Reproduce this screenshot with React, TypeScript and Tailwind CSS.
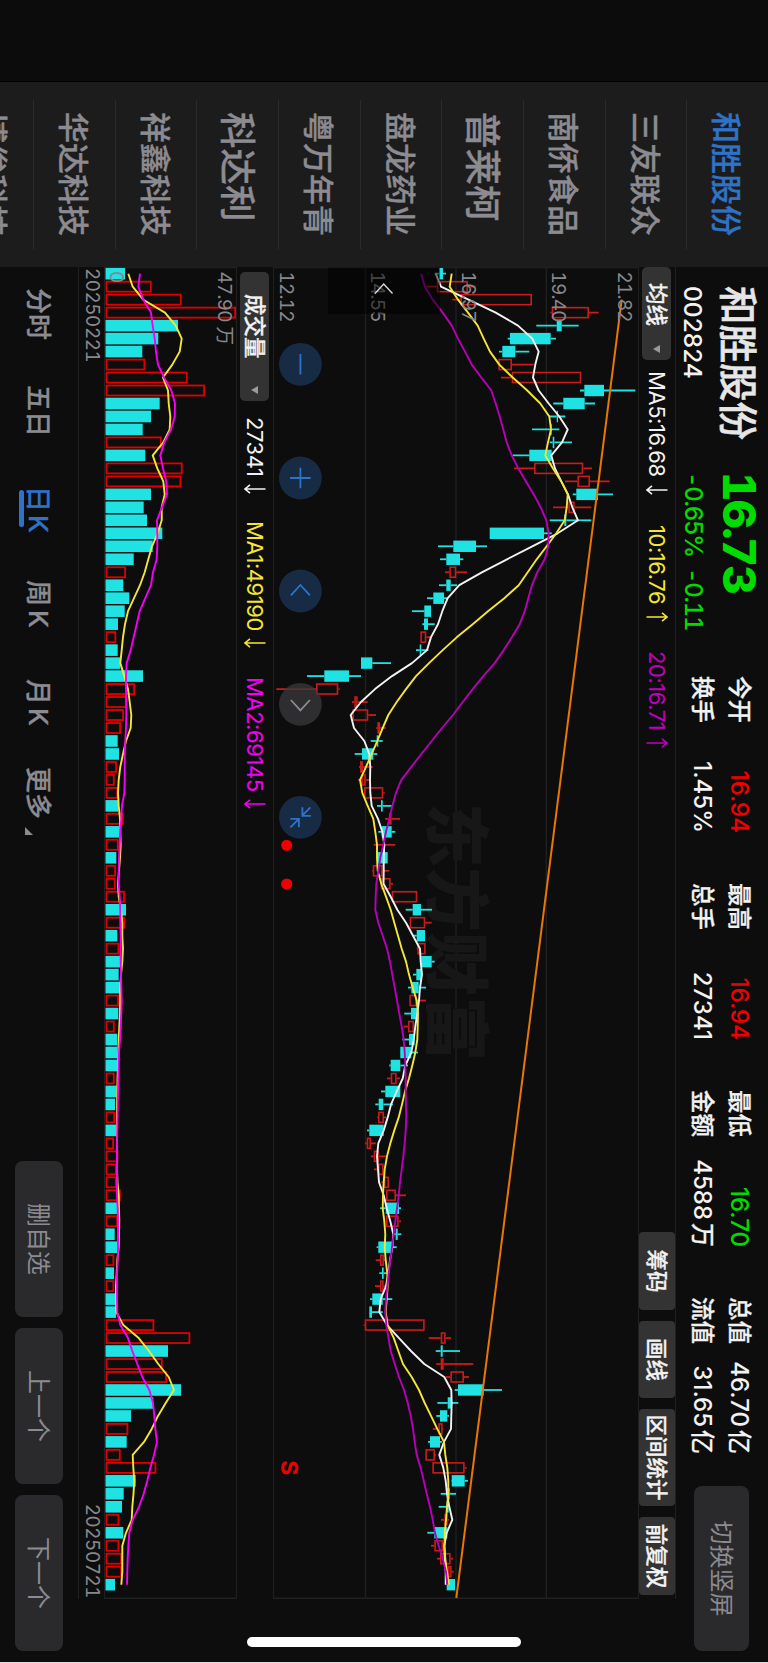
import React from "react";

const FONT = "font-['Inter','Noto_Sans_CJK_SC',sans-serif]";

/* ---------- data ---------- */

// kind, low, body low, body high, high, volume level (negative = rising volume bar)
type Row = [string, number, number, number, number, number];

const ROWS: Row[] = [
  ["d", 434.7, 439, 443, 446, 125], ["u", 426.7, 436.7, 468, 475.7, -151.7], ["u", 452.3, 460.3, 532, 532, -181.7],
  ["u", 550.3, 551.7, 589, 598.7, -236], ["d", 536.3, 556.7, 561.7, 578.7, 178], ["d", 507.7, 510, 550.7, 556, 158.3],
  ["d", 499, 502.3, 515.3, 529.3, 142.3], ["u", 498.3, 498.3, 512, 533.7, -145.3], ["u", 501, 511.7, 581.3, 581.3, -187.7],
  ["d", 580, 584.3, 604, 635.3, -205], ["d", 553.3, 563.3, 584.7, 595, 159.7], ["d", 549, 556.7, 558, 565.3, 151],
  ["d", 532, 550, 551.7, 559.3, 142.7], ["d", 549.7, 552.7, 554.3, 572, -161.7], ["d", 512.7, 529.3, 551.7, 551.7, 145.3],
  ["u", 514, 534, 583.3, 592, -182.7], ["u", 565, 577.3, 590, 609.7, -181.3], ["d", 572.7, 576.3, 598, 613, 151],
  ["u", 553, 568.3, 574.7, 591.3, 143.7], ["d", 549.7, 564.3, 566.3, 591.3, 147], ["d", 489.7, 489.7, 544, 551.7, 162.3],
  ["d", 438, 453.3, 476, 487, 152.7], ["d", 440, 446.3, 460, 463.3, 133.7], ["u", 445, 449.3, 456.3, 467, -126],
  ["d", 439, 446.3, 450.7, 457, 123.3], ["d", 427, 433.3, 444, 447.3, 129.3], ["d", 412, 424.3, 431, 431, 124.7],
  ["d", 422.3, 424, 428, 434.7, 118], ["u", 420.3, 420.3, 426.3, 431, -116.3], ["d", 416, 419.7, 421.3, 428.3, 117.7],
  ["d", 361, 361, 372.3, 391, 120.3], ["d", 307, 324.3, 349, 361, 143], ["u", 276.3, 316, 338.3, 339.7, -135],
  ["u", 352, 354.3, 357.7, 367.7, -126.7], ["u", 351, 352.3, 368.3, 376, -124], ["u", 376.3, 377.3, 380, 385.7, -121],
  ["d", 370.7, 376.7, 378.3, 382.7, 117.7], ["d", 354.7, 362, 373.3, 377.3, 119], ["u", 359, 360, 363, 372.7, -117],
  ["u", 358, 361.3, 365.7, 369.7, -114.7], ["u", 364, 364, 383.3, 384.7, -118], ["d", 377, 381, 382.7, 391.7, 118],
  ["u", 385, 389, 391.7, 400, -123.7], ["d", 378.3, 381.7, 391.7, 395.3, 119], ["u", 373.7, 383.3, 384.7, 395.3, -118.7],
  ["d", 377, 377.3, 387.7, 387.7, 116.3], ["u", 372, 372.7, 382.7, 389.3, -116], ["u", 380, 380.7, 390.7, 393, -115.7],
  ["u", 391.7, 391.7, 417.3, 417.3, -125], ["d", 405.7, 412.7, 421, 432, 126], ["u", 409.7, 409.7, 425.3, 431.7, -125],
  ["d", 412.7, 416.7, 425, 425, 117.3], ["u", 416.7, 417.3, 425.7, 425.7, -119.3], ["d", 420, 421.3, 431.7, 434.7, 120.3],
  ["d", 413, 416.3, 421.7, 421.7, 118.7], ["d", 408, 411.3, 418.7, 426, 120], ["u", 409, 409.3, 416.7, 426, -119],
  ["d", 404.3, 411, 418, 418, 118.3], ["u", 404, 408, 414, 414, -114.7], ["d", 402.3, 409, 414.7, 414.7, 117.3],
  ["d", 400, 400.3, 411.3, 418, 117.3], ["d", 389.3, 390.7, 400.3, 408, 117.3], ["u", 387, 390.7, 396.7, 400, -114.7],
  ["d", 381, 385.3, 400.3, 400.3, 116.7], ["d", 375.3, 378.7, 383.3, 393, 115], ["u", 377.3, 378, 384, 386, -115],
  ["d", 367, 369.3, 383.7, 383.7, 116.7], ["u", 365, 366.7, 371, 375.7, -114], ["u", 371, 373.7, 379, 386, -118.3],
  ["u", 374, 378, 383.7, 383.7, -116.7], ["u", 381.3, 383.7, 389, 389, -116.7], ["u", 386, 386, 396, 406, -120.7],
  ["d", 380, 385.7, 399, 401, 118.3], ["u", 386, 386, 398.7, 401, -118], ["d", 394, 395.7, 397.7, 401.3, 114.7],
  ["d", 376.7, 378.3, 391.7, 396.7, 118], ["u", 375.7, 380, 384, 386, -114.3], ["d", 379.3, 382, 383.7, 387, 114],
  ["u", 375, 380, 383.7, 386, -114.3], ["d", 370, 372.3, 382.7, 392.3, 116], ["d", 369.3, 369.3, 372, 382.7, 116],
  ["u", 363.7, 364.7, 424.7, 424.7, -154.3], ["u", 428.7, 440.7, 445.7, 451, -190.3], ["d", 435.7, 440.7, 442.7, 460, 168],
  ["u", 436.3, 440.7, 443.7, 473.3, -162.7], ["u", 446, 450.3, 464, 469, -167], ["d", 454.7, 458, 483.7, 502, 181],
  ["d", 437.3, 447.7, 451.3, 458.3, 153.3], ["d", 436.3, 440, 447.3, 449, 131], ["u", 432.7, 438.3, 442.7, 443.3, -128.3],
  ["d", 428, 430, 440, 442, 126.7], ["u", 425.3, 425.3, 435, 436, -120.7], ["u", 432.3, 432.3, 464.7, 466.7, -156.3],
  ["d", 451.3, 451.7, 464.7, 468, 135.7], ["d", 440.7, 447, 449.7, 456, 123.7], ["d", 438.7, 446.7, 448.7, 448.7, 122],
  ["u", 441, 444.3, 447.7, 449, -119.3], ["d", 427.3, 434.3, 447.3, 447.3, 123.3], ["u", 431, 434.3, 443, 444, -119.3],
  ["u", 437, 440, 450.7, 453, -122], ["u", 447.3, 448, 451.7, 453.7, -122], ["d", 446.7, 446.7, 455, 455, 115],
];

const MA5 = [
  435.7, 441, 468.5, 495.7, 518, 532.3, 538.7, 535.3, 533, 538.7, 548.7, 559.3, 567.7, 562, 551.3, 555, 561.3, 568, 572.3, 578,
  557.7, 532.3, 507, 482.3, 459.3, 447.7, 442.3, 438, 431, 427, 412, 392, 375, 361, 350.7, 354, 364.3, 369.3, 370.3, 370,
  370.3, 371.7, 378, 382.3, 384.3, 383.7, 383.7, 383.5, 390.7, 397.3, 406, 413, 420, 420.7, 422, 420, 419, 417.3, 415.3, 413.7,
  411.3, 405.3, 402.7, 396.7, 391, 387.7, 383.7, 378.3, 377, 378, 379, 383.7, 386.7, 390.3, 393.3, 392.3, 390, 388.3, 386, 380.7,
  379.3, 387, 399, 411, 424.3, 444.3, 451.3, 451.7, 451.3, 451, 444, 439.3, 443.3, 445.7, 447, 449.3, 452.3, 446.7, 444.3, 444.7,
  445.7, 445.7,
];
const MA10 = [
  451.7, 449.7, 458, 468, 477.7, 483.7, 490, 499.3, 512.7, 527.3, 540.3, 549.3, 551, 548, 545.3, 553, 561.3, 567.7, 566.7, 564.7,
  556.3, 546.7, 536.7, 527.7, 518.7, 504.3, 488, 472.7, 457, 442.7, 429, 416, 406, 396.7, 388.3, 382.7, 377.3, 371.7, 366, 360,
  362.3, 367.7, 373.3, 375.3, 377, 377, 377.7, 381.3, 386, 390.7, 394.3, 398, 401.7, 406, 409, 412.7, 416.7, 418, 417.7, 417.3,
  415.3, 412.3, 409, 405, 402, 398.7, 394.3, 390.3, 387, 384.7, 383.7, 383, 382.7, 384.3, 385.3, 384.7, 385.7, 387.3, 387.7, 386.7,
  385.7, 387.7, 393.8, 398.3, 403, 411.7, 419, 424.7, 431, 437.3, 444, 445.3, 447.3, 448.3, 448.3, 447, 446, 444.7, 444.5, 445.3,
  447, 449,
];
const MA20 = [
  421, 425, 432.7, 442.7, 451.7, 458, 465, 471.7, 481.3, 491.3, 495.7, 499.7, 503.3, 506.7, 511.7, 518.3, 526, 533.7, 540.7, 546.3,
  548.7, 548.3, 544.7, 537.3, 532, 528.3, 524.7, 519.7, 512, 503.7, 494.7, 483.3, 472.7, 462.7, 453, 442, 431.7, 421.3, 411.3, 401.3,
  396, 392.3, 389.3, 386, 383.3, 380.3, 378.3, 376.3, 375.7, 375.3, 378.3, 382.7, 387, 390, 392.3, 394.7, 397, 399.3, 401.7, 403.7,
  404.7, 405.3, 405.7, 405.7, 406, 406.3, 405.7, 404.7, 403.3, 401.7, 400, 398.7, 397, 395.3, 393.7, 392, 390.3, 388.7, 387.3, 386,
  385.3, 386.3, 388.5, 390.7, 394.7, 399, 404, 407.7, 410.7, 413, 414.7, 416.7, 420.7, 423.7, 426.7, 430, 432.7, 435, 438.7, 442.7,
  446, 447.3,
];
const VOL_A = [
  128.3, 132.7, 143.3, 165, 175.7, 181.7, 179.7, 172.3, 163, 168, 168.7, 170.3, 169.7, 163.3, 152.7, 157.3, 163.3, 164.7, 161.7, 161.7,
  157.7, 152, 148.3, 144.7, 140, 134, 128, 125, 123, 121.7, 120.3, 124.3, 128, 129.7, 131.3, 130.7, 126, 123, 120.3, 118.7,
  118, 118.7, 120, 120.3, 120.7, 120, 119, 118, 118.7, 121, 122.3, 122.3, 123, 122.3, 121, 120.3, 120, 120, 119.3, 118.7,
  118.3, 118, 117.5, 117.3, 117, 117, 117, 117, 117, 117, 117.5, 118.7, 119, 119.3, 119, 118.7, 117.3, 116.7, 116, 116,
  116.3, 123.3, 138.7, 149, 158.3, 168.7, 174, 165.7, 158, 151.7, 144, 132.7, 133.3, 134.3, 133.5, 132.3, 131.7, 126, 122.3, 122.3,
  122.3, 121.3,
];
const VOL_B = [
  140, 138.3, 143.3, 151, 152.7, 154.7, 156, 158, 164, 171.3, 175, 174.7, 171, 164.3, 160.3, 163, 166.3, 167, 162, 157,
  157.3, 157.3, 156.7, 153, 151, 145.3, 139.7, 136.7, 133.7, 130.7, 126.7, 126, 126, 126.3, 126.3, 126, 125.3, 124.7, 124.7, 124.7,
  124.3, 122, 121.3, 120.3, 119.7, 119, 118.7, 118.7, 119.7, 120.3, 120.3, 120.7, 120.7, 120.7, 121, 121.3, 121.7, 121.3, 120.7, 120,
  119, 118.7, 118.3, 118, 117.7, 117.5, 117.3, 117, 117, 117, 117, 117, 117.7, 118, 118, 118, 117.7, 117, 117, 117,
  117.3, 120.3, 128, 132.3, 137.3, 142.3, 149.3, 153, 154.3, 155.3, 157, 154, 150.3, 147.3, 143.7, 139, 132.7, 129.3, 128.3, 127.7,
  127.3, 127,
];

const xOf = (i: number) => 273.7 + 12.98 * i;
const yOf = (level: number) => 768 - level;
const toPoints = (levels: number[]) =>
  levels.map((v, i) => `${xOf(i).toFixed(1)},${yOf(v).toFixed(1)}`).join(" ");

/* ---------- small pieces ---------- */

function Arrow({ up = false }: { up?: boolean }) {
  return (
    <svg className="h-[22px] w-[10px] shrink-0" viewBox="0 0 10 22" fill="none" stroke="currentColor" strokeWidth="1.6">
      {up ? <path d="M5 21.5V1M0.8 6L5 1l4.2 5" /> : <path d="M5 .5V21M0.8 16L5 21l4.2-5" />}
    </svg>
  );
}

function Caret() {
  return (
    <svg className="h-[7px] w-[8px] shrink-0" viewBox="0 0 8 7">
      <path d="M0 0h8L4 7z" fill="#9a9a9e" />
    </svg>
  );
}

function Candle({ row, i }: { row: Row; i: number }) {
  const [kind, low, bodyLow, bodyHigh, high] = row;
  const x = xOf(i);
  const up = kind === "u";
  const color = up ? "#cb1b1b" : "#20e2e2";
  return (
    <g>
      {high > bodyHigh && <path d={`M${x} ${yOf(high)}V${yOf(bodyHigh)}`} stroke={color} strokeWidth="1.8" />}
      {low < bodyLow && <path d={`M${x} ${yOf(low)}V${yOf(bodyLow)}`} stroke={color} strokeWidth="1.8" />}
      {up ? (
        <rect
          x={x - 5}
          y={yOf(bodyHigh) + 0.8}
          width="10"
          height={Math.max(bodyHigh - bodyLow - 1.6, 0.2)}
          fill="none"
          stroke={color}
          strokeWidth="1.6"
        />
      ) : (
        <rect x={x - 5.7} y={yOf(bodyHigh)} width="11.4" height={bodyHigh - bodyLow} fill={color} />
      )}
    </g>
  );
}

function VolumeBar({ level, i }: { level: number; i: number }) {
  const x = xOf(i);
  const top = yOf(Math.abs(level));
  return level < 0 ? (
    <rect x={x - 5} y={top + 0.9} width="10" height={662 - top - 1.4} fill="none" stroke="#e00000" strokeWidth="1.8" />
  ) : (
    <rect x={x - 5.8} y={top} width="11.6" height={662.5 - top} fill="#20e2e2" />
  );
}

/* ---------- sidebar ---------- */

const STOCKS = [
  "和胜股份", "三友联众", "南侨食品", "普莱柯", "盘龙药业",
  "粤万年青", "科达利", "祥鑫科技", "华达科技", "博俊科技",
];

function Sidebar() {
  return (
    <aside className="flex w-[185px] shrink-0 flex-col overflow-hidden bg-[#1c1c1c] px-[18px]">
      {STOCKS.map((name, i) => (
        <div
          key={name}
          className={`flex h-[81.67px] shrink-0 items-center whitespace-nowrap border-b border-[#2b2b2b] pl-[12px] pt-[3px] font-medium [-webkit-text-stroke:0.35px] ${
            name.length === 3 ? "text-[36.5px]" : "text-[31px]"
          } ${i === 0 ? "text-[#2f73c8]" : "text-[#8c8b91]"}`}
        >
          {name}
        </div>
      ))}
    </aside>
  );
}

/* ---------- header ---------- */

const STATS = [
  { label: ["今开", "换手"], value: ["16.94", "1.45%"], unit: ["", ""], tone: "text-[#f00000]" },
  { label: ["最高", "总手"], value: ["16.94", "27341"], unit: ["", ""], tone: "text-[#f00000]" },
  { label: ["最低", "金额"], value: ["16.70", "4588"], unit: ["", "万"], tone: "text-[#00dc00]" },
  { label: ["总值", "流值"], value: ["46.70", "31.65"], unit: ["亿", "亿"], tone: "text-[#f2f2f2]" },
];

function Header() {
  return (
    <header className="flex h-[92px] shrink-0 font-medium text-[#f2f2f2]">
      <div className="ml-[19px] flex w-[186px] flex-col whitespace-nowrap">
        <div className="mt-[10px] text-[38.5px] leading-[40px] text-[#e6e6e6] [-webkit-text-stroke:0.6px]">和胜股份</div>
        <div className="mt-[11px] text-[24.5px] leading-[28px]">002824</div>
      </div>
      <div className="flex w-[204px] flex-col whitespace-nowrap text-[#00dc00]">
        <div className="mt-[9px] text-[45.5px] font-extrabold leading-[40px] tabular-nums tracking-[-1.8px]">16.73</div>
        <div className="mt-[12px] flex gap-[16px] text-[24px] leading-[28px] tabular-nums">
          <span className="w-[80px] tracking-[-1.3px]">-0.65%</span>
          <span className="tracking-[-1.3px]">-0.11</span>
        </div>
      </div>
      <div className="flex gap-[50px] text-[24px] leading-[28px]">
        {STATS.map(({ label, value, unit, tone }) => (
          <div key={label[0]} className="flex w-[157px] flex-col gap-[9px] pt-[15px]">
            {[0, 1].map((r) => (
              <div key={r} className="flex justify-between">
                <span className="text-[23.5px] [-webkit-text-stroke:0.3px]">{label[r]}</span>
                <span className={`flex gap-[3px] ${r === 0 ? tone : ""}`}>
                  {value[r]}
                  {unit[r] && <span className="[-webkit-text-stroke:0.2px]">{unit[r]}</span>}
                </span>
              </div>
            ))}
          </div>
        ))}
      </div>
      <button className="ml-[32px] mt-[19px] h-[55px] w-[165px] rounded-lg bg-[#2a2a2c] pt-[1px] text-[24px] font-normal text-[#8c8b91]">
        切换竖屏
      </button>
    </header>
  );
}

/* ---------- indicator bars ---------- */

function MaBar() {
  return (
    <div className="flex h-[38px] w-[1332px] shrink-0 items-center border-y border-[#202020] text-[22px] tracking-[-0.45px] text-[#f2f2f2]">
      <div className="flex h-[29px] w-[93px] items-center gap-[19px] rounded-[5px] bg-[#333333] pl-[16px] pt-[1px] text-[21.5px] font-medium tracking-normal [-webkit-text-stroke:0.3px]">
        均线 <Caret />
      </div>
      <div className="ml-[11px] flex w-[154px] items-center gap-[8px]">MA5:16.68<Arrow /></div>
      <div className="flex w-[126px] items-center gap-[8px] text-[#f5e636]">10:16.76<Arrow up /></div>
      <div className="flex items-center gap-[8px] text-[#c000c0]">20:16.71<Arrow up /></div>
      <div className="ml-auto mr-[4px] flex h-full items-center gap-[11px] text-[21.5px] font-medium tracking-normal [-webkit-text-stroke:0.3px]">
        <button className="h-[36px] w-[78px] rounded-[4px] bg-[#333333] pt-[1px]">筹码</button>
        <button className="h-[36px] w-[77px] rounded-[4px] bg-[#333333] pt-[1px]">画线</button>
        <button className="h-[36px] w-[97px] rounded-[4px] bg-[#333333] pt-[1px]">区间统计</button>
        <button className="h-[36px] w-[78px] rounded-[4px] bg-[#333333] pt-[1px]">前复权</button>
      </div>
    </div>
  );
}

function VolumeHeader() {
  return (
    <div className="flex h-[38px] w-[1332px] shrink-0 items-center border-y border-[#202020] text-[22px] tracking-[-0.45px] text-[#f2f2f2]">
      <div className="ml-[5px] flex h-[29px] w-[129px] items-center gap-[27px] rounded-[5px] bg-[#333333] pl-[22px] pt-[1px] text-[21.5px] font-medium tracking-normal [-webkit-text-stroke:0.3px]">
        成交量 <Caret />
      </div>
      <div className="ml-[16px] flex w-[104px] items-center gap-[7px]">27341<Arrow /></div>
      <div className="flex w-[156px] items-center gap-[7px] text-[#f5e636]">MA1:49190<Arrow /></div>
      <div className="flex items-center gap-[7px] text-[#f500f5]">MA2:69145<Arrow /></div>
    </div>
  );
}

/* ---------- charts ---------- */

const AXIS: [string, number][] = [
  ["21.82", 624.7], ["19.40", 559], ["16.97", 468.7], ["14.55", 377.5], ["12.12", 286.7],
];

const TOOLS = [
  { x: 364.3, muted: false, d: "M-10.3 0H10.3" },
  { x: 478, muted: false, d: "M-10.3 0H10.3M0 -10.3V10.3" },
  { x: 591, muted: false, d: "M4.3 -9.5L-6 0L4.3 9.5" },
  { x: 704.3, muted: true, d: "M-4.3 -9.5L6 0L-4.3 9.5" },
  { x: 817.3, muted: false, d: "M-10 -10L-1.5 -1.5M-10 -2H-1.5V-10.5M10 10L1.5 1.5M10 1.5H1.5V10" },
];

function PriceChart() {
  return (
    <svg className="block h-[364px] w-[1332px] shrink-0" viewBox="267 130 1332 364">
      <g stroke="#202020" strokeWidth="1.4">
        <path d="M267 221.7H1598M267 312H1598M267 402.5H1598M267.5 130V494M1598.3 130V494" />
      </g>
      <text
        x="803"
        y="335"
        fontSize="64.5"
        fontWeight="900"
        fill="#171717"
        className="font-['Noto_Sans_CJK_SC',sans-serif]"
      >
        东方财富
      </text>
      {ROWS.map((row, i) => (
        <Candle key={i} row={row} i={i} />
      ))}
      <g fill="none" strokeWidth="1.9" strokeLinejoin="round">
        <polyline points={toPoints(MA5)} stroke="#f2f2f2" />
        <polyline points={toPoints(MA10)} stroke="#f5e636" />
        <polyline points={toPoints(MA20)} stroke="#b800b8" />
        <path d="M299.7 146.3L1598 311.7" stroke="#e87800" strokeWidth="2" />
      </g>
      <g fontSize="19" fill="#88888c" letterSpacing="-0.8" className="tabular-nums">
        {AXIS.map(([label, level]) => (
          <text key={label} x="271.5" y={yOf(level) + 6.9}>
            {label}
          </text>
        ))}
      </g>
      <rect x="267.5" y="328" width="46.5" height="112" fill="#000000" fillOpacity="0.5" />
      <path d="M293.5 375.5L284 384.3L293.5 393" fill="none" stroke="#d8d8d8" strokeWidth="1.4" />
      {TOOLS.map((t) => (
        <g key={t.x} transform={`translate(${t.x} 467.6)`} fill="none" strokeWidth="1.8">
          <circle r="21.4" fill={t.muted ? "#3a3a3c" : "#1a3354"} fillOpacity={t.muted ? 0.75 : 0.8} />
          <path d={t.d} stroke={t.muted ? "#8c8b91" : "#2f73c8"} />
        </g>
      ))}
      <g fill="#ee0000">
        <circle cx="845.3" cy="481.3" r="5.6" />
        <circle cx="884" cy="481.3" r="5.6" />
        <text x="1460.3" y="487.2" fontSize="23" fontWeight="700">
          S
        </text>
      </g>
    </svg>
  );
}

function VolumeChart() {
  return (
    <svg className="block h-[131px] w-[1332px] shrink-0" viewBox="267 532 1332 131">
      <path d="M267.5 532V663M1598.3 532V663" stroke="#202020" strokeWidth="1.4" />
      {ROWS.map((row, i) => (
        <VolumeBar key={i} level={row[5]} i={i} />
      ))}
      <g fontSize="19" fill="#88888c" letterSpacing="-0.8" className="tabular-nums">
        <text x="271.5" y="550.2">47.90 万</text>
        <text x="271" y="658.2">0</text>
      </g>
      <g fill="none" strokeWidth="1.9" strokeLinejoin="round">
        <polyline points={toPoints(VOL_A)} stroke="#f5e636" />
        <polyline points={toPoints(VOL_B)} stroke="#f500f5" />
      </g>
    </svg>
  );
}

/* ---------- footer ---------- */

function Footer() {
  return (
    <footer className="flex h-[78px] shrink-0 items-center pl-[21px] text-[26px] font-medium text-[#8c8b91]">
      <nav className="flex whitespace-nowrap pt-[2px] leading-[36px] [-webkit-text-stroke:0.3px]">
        <span className="w-[97px]">分时</span>
        <span className="w-[101px]">五日</span>
        <div className="relative flex w-[94px] gap-[3px] text-[#2f73c8]">
          日<span>K</span>
          <span className="absolute left-[4px] top-[31.5px] h-[5.5px] w-[37px] rounded-full bg-[#2f73c8]" />
        </div>
        <span className="flex w-[99px] gap-[4px]">周<span>K</span></span>
        <span className="flex w-[88px] gap-[3px]">月<span>K</span></span>
        <span className="flex items-end gap-[8px]">
          更多
          <svg width="8" height="8" viewBox="0 0 8 8" className="mb-[5px]">
            <path d="M8 0V8H0z" fill="#8c8b91" />
          </svg>
        </span>
      </nav>
      <div className="ml-auto mr-[12px] flex gap-[11px] text-[24px] font-normal">
        <button className="h-[48px] w-[156px] rounded-lg bg-[#2a2a2c] pt-[1px]">删自选</button>
        <button className="h-[48px] w-[156px] rounded-lg bg-[#2a2a2c] pt-[1px]">上一个</button>
        <button className="h-[48px] w-[156px] rounded-lg bg-[#2a2a2c] pt-[1px]">下一个</button>
      </div>
    </footer>
  );
}

export default function App() {
  return (
    <div className="h-[1663px] w-[768px] overflow-hidden bg-[#0d0d0d]">
      <div
        className={`relative flex h-[768px] w-[1663px] origin-top-left translate-x-[768px] rotate-90 bg-[#0d0d0d] ${FONT}`}
      >
        <div className="w-[82px] shrink-0 border-r border-black bg-[#0c0c0c]" />
        <Sidebar />
        <main className="flex w-[1396px] shrink-0 flex-col">
          <Header />
          <MaBar />
          <PriceChart />
          <VolumeHeader />
          <VolumeChart />
          <div className="flex h-[27px] w-[1332px] shrink-0 items-center justify-between border-y border-[#202020] px-[1px] text-[18.8px] tabular-nums tracking-[-0.4px] text-[#88888c]">
            <span>20250221</span>
            <span>20250721</span>
          </div>
          <Footer />
        </main>
        <div className="absolute left-[1637px] top-[247px] h-[274px] w-[10px] rounded-full bg-white" />
        <div className="absolute right-0 top-0 h-full w-px bg-[#dcdcdc]" />
      </div>
    </div>
  );
}
